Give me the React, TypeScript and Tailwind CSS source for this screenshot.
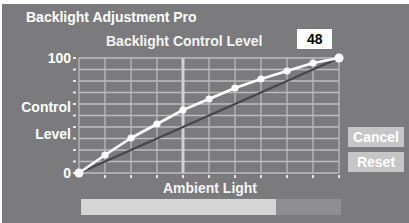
import React from 'react';

const points: [number, number][] = [
  [8, 124], [34, 106], [60, 89], [86, 75], [112, 61], [138, 50],
  [164, 39], [190, 30], [216, 22], [242, 14], [268, 9],
];

const cols = Array.from({ length: 11 }, (_, i) => 8 + i * 26);
const rows = Array.from({ length: 11 }, (_, i) => 9 + i * 11.5);

const CurveChart: React.FC = () => (
  <svg width="275" height="131" viewBox="0 0 275 131" className="shrink-0">
    {rows.map(y => (
      <line key={`h${y}`} x1="8" x2="268" y1={y} y2={y} stroke="#bcbcbc" strokeWidth="1.3" />
    ))}
    {cols.map(x => (
      <line key={`v${x}`} x1={x} x2={x} y1="9" y2="124" stroke="#bcbcbc" strokeWidth="1.3" />
    ))}
    <line x1="112" x2="112" y1="9" y2="124" stroke="#d2d2d2" strokeWidth="3" />
    {rows.map(y => (
      <rect key={`lt${y}`} x="2" y={y - 1} width="3" height="2" fill="#e6e6e6" />
    ))}
    {cols.slice(1).map(x => (
      <rect key={`bt${x}`} x={x - 1} y="126" width="2" height="3" fill="#e6e6e6" />
    ))}
    <line x1="8" y1="124" x2="268" y2="9" stroke="#48484a" strokeWidth="2.4" />
    <polyline
      points={points.map(p => p.join(',')).join(' ')}
      fill="none"
      stroke="#ffffff"
      strokeWidth="2.6"
      strokeLinejoin="round"
    />
    {points.map(([x, y], i) => (
      <circle key={i} cx={x} cy={y} r={i === 0 || i === points.length - 1 ? 4.5 : 3.6} fill="#ffffff" />
    ))}
  </svg>
);

export default function App() {
  return (
    <div
      className="w-[409px] h-[223px] bg-white pt-[4px] pl-[2px] overflow-hidden"
      style={{ fontFamily: '"Liberation Sans", Arial, sans-serif' }}
    >
      <div className="h-full bg-[#7b7b7d] pt-[5px] text-white font-bold text-[14px] leading-[16px]">
        <div className="pl-[24px] h-[16px]">Backlight Adjustment Pro</div>

        <div className="flex mt-[4px] h-[20px]">
          <div className="pl-[104px] mt-[4px] text-[#f4f4f4]">Backlight Control Level</div>
          <div className="ml-[35px] w-[35px] h-[20px] bg-white text-black flex items-center justify-center">
            48
          </div>
        </div>

        <div className="flex h-[131px]">
          <div className="w-[69px] flex flex-col items-end">
            <div className="mt-[1px]">100</div>
            <div className="mt-[33px]">Control</div>
            <div className="mt-[11px]">Level</div>
            <div className="mt-[23px]">0</div>
          </div>
          <CurveChart />
          <div className="ml-[2px] flex flex-col gap-[5px] pt-[78px]">
            <button className="w-[56px] h-[20px] bg-[#c6c6c6] text-white font-bold text-[14px] leading-none">
              Cancel
            </button>
            <button className="w-[56px] h-[20px] bg-[#c6c6c6] text-white font-bold text-[14px] leading-none">
              Reset
            </button>
          </div>
        </div>

        <div className="pl-[77px] w-[339px] h-[16px] text-center text-[#f4f4f4]">Ambient Light</div>

        <div className="ml-[79px] mt-[3px] w-[260px] h-[16px] flex">
          <div className="w-[195px] bg-[#d5d5d5]" />
          <div className="flex-1 bg-[#8f8f91]" />
        </div>
      </div>
    </div>
  );
}
